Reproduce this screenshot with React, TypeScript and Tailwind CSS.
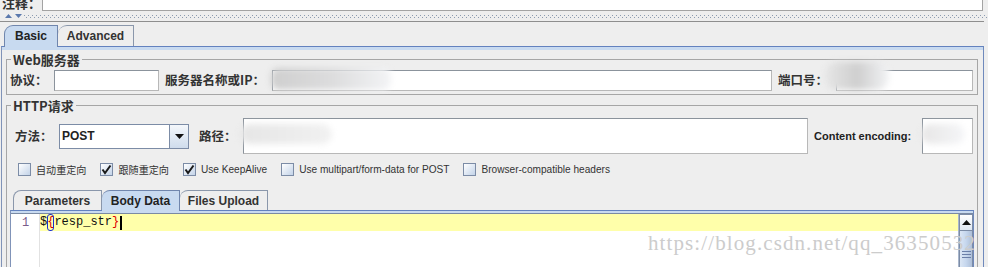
import React from "react";

const F = "font-['Liberation_Sans','Noto_Sans_CJK_SC',sans-serif]";
const CJK = "font-['Noto_Sans_CJK_SC','Liberation_Sans',sans-serif]";

function Check({ checked }: { checked?: boolean }) {
  return (
    <span className="w-[13px] h-[13px] shrink-0 border border-[#7c8ca6] bg-gradient-to-br from-white to-[#c3d3e8] flex items-center justify-center">
      {checked && (
        <svg width="11" height="11" viewBox="0 0 11 11">
          <path d="M1.5 5.5 L4 9 L9.5 1.5" stroke="#1a1a1a" strokeWidth="2" fill="none" />
        </svg>
      )}
    </span>
  );
}

function Blob({ className }: { className: string }) {
  return <div className={`absolute blur-[3px] ${className}`} />;
}

export default function App() {
  return (
    <div className={`w-[988px] h-[267px] overflow-hidden bg-[#eeeeee] relative ${F} text-[#222]`}>
      {/* comment row */}
      <div className="h-[11px] flex">
        <div className="w-[42px] h-[11px] overflow-hidden">
          <div className={`${CJK} font-bold text-[13px] leading-[13px] mt-[-4px] ml-[2px] text-[#333]`}>注释：</div>
        </div>
        <div className="w-[941px] h-[11px] bg-white border-b border-r border-l border-[#a3a3a3]" />
      </div>
      {/* splitter */}
      <div className="h-[10px] relative">
        <svg className="absolute left-[5px] top-[3px]" width="18" height="5" viewBox="0 0 18 5">
          <path d="M0 4 L3.5 0 L7 4 Z" fill="#5b79ad" />
          <path d="M10 0 L17 0 L13.5 4 Z" fill="#5b79ad" />
        </svg>
        <div className="absolute left-[24px] right-0 top-[4px] h-[1px] bg-[repeating-linear-gradient(90deg,#8c9bb0_0_1px,transparent_1px_4px)]" />
        <div className="absolute left-[26px] right-0 top-[6px] h-[1px] bg-[repeating-linear-gradient(90deg,#8c9bb0_0_1px,transparent_1px_4px)]" />
      </div>
      <div className="h-[1px] w-[984px] bg-[#8e8e8e]" />

      {/* main tabbed pane */}
      <div className="ml-[1px] w-[983px] mt-[2px]">
        <div className="flex items-end h-[22px] pl-[3px]">
          <div className="relative z-10 w-[54px] h-[22px] mb-[-1px] bg-[#c8daf0] border-t border-l border-r border-[#7086ad] rounded-tl-[9px] flex items-center justify-center text-[12px] font-bold pb-[1px]">
            Basic
          </div>
          <div className="w-[76px] h-[21px] border-t border-r border-[#8a97ab] rounded-tl-[9px] flex items-center justify-center text-[12px] font-bold text-[#333]">
            Advanced
          </div>
        </div>
        <div className="border-t border-[#6382bf] border-l border-r border-l-[#8093b8] border-r-[#6f89bc]">
          <div className="h-[3px] bg-[#c8daf0]" />
          <div className="pl-[4px] pt-[3px] h-[300px]">
            {/* Web server group */}
            <fieldset className="w-[972px] border border-[#a6a6a6] pl-[3px] pr-[3px] pb-[3px]">
              <legend className={`${CJK} ml-[1px] px-[2px] font-bold text-[13px] leading-[13px] text-[#333]`}>Web服务器</legend>
              <div className={`flex items-center pt-[4px] ${CJK} font-bold text-[12.5px] text-[#333]`}>
                <span className="w-[44px]">协议：</span>
                <div className="w-[105px] h-[21px] bg-white border border-[#8b939c] border-b-[#b8b8b8] border-r-[#b8b8b8]" />
                <span className="ml-[6px] w-[107px]">服务器名称或IP：</span>
                <div className="relative w-[500px] h-[21px] bg-white border border-[#8b939c] border-b-[#b8b8b8] border-r-[#b8b8b8]">
                  <Blob className="left-[-2px] top-[-3px] w-[120px] h-[22px] rounded-[8px] bg-gradient-to-r from-[#cfcfcf] via-[#dcdcdd] to-[#f3f4f6]" />
                </div>
                <span className="ml-[6px] w-[58px]">端口号：</span>
                <div className="relative w-[137px] h-[21px] bg-white border border-[#8b939c] border-b-[#b8b8b8] border-r-[#b8b8b8]">
                  <Blob className="left-[-12px] top-[-9px] w-[64px] h-[28px] rounded-[12px] bg-gradient-to-r from-[#e6e6e6] via-[#cfcfcf] to-[#f2f3f5]" />
                </div>
              </div>
            </fieldset>

            {/* HTTP group */}
            <fieldset className="mt-[4px] w-[972px] border border-[#a6a6a6] pl-[3px] pr-[3px] h-[200px]">
              <legend className={`${CJK} ml-[1px] px-[2px] font-bold text-[13px] leading-[13px] text-[#333]`}>HTTP请求</legend>
              <div className={`flex items-center pt-[6px] pl-[5px] ${CJK} font-bold text-[12.5px] text-[#333]`}>
                <span className="w-[44px]">方法：</span>
                <div className="flex w-[130px] h-[25px]">
                  <div className="flex-1 bg-white border border-[#7c8ca6] flex items-center pl-[2px] font-['Liberation_Sans'] font-bold text-[12px] text-[#222]">
                    POST
                  </div>
                  <div className="w-[19px] border-t border-b border-r border-[#7c8ca6] bg-gradient-to-b from-[#f4f7fb] to-[#cfdcec] flex items-center justify-center">
                    <svg width="9" height="5" viewBox="0 0 9 5"><path d="M0 0 L9 0 L4.5 5 Z" fill="#111" /></svg>
                  </div>
                </div>
                <span className="ml-[10px] w-[44px]">路径：</span>
                <div className="relative w-[565px] h-[36px] bg-white border border-[#8b939c] border-b-[#b8b8b8] border-r-[#b8b8b8]">
                  <Blob className="left-[-4px] top-[5px] w-[92px] h-[20px] rounded-[10px] bg-gradient-to-r from-[#e6e6e6] to-[#f1f1f1]" />
                </div>
                <span className="ml-[6px] w-[108px] font-['Liberation_Sans'] font-bold text-[11px] text-[#222]">Content encoding:</span>
                <div className="relative w-[51px] h-[36px] bg-white border border-[#8b939c] border-b-[#b8b8b8] border-r-[#b8b8b8]">
                  <Blob className="left-[-2px] top-[5px] w-[44px] h-[20px] rounded-[10px] bg-gradient-to-r from-[#e7e6e6] to-[#f5f6f8]" />
                </div>
              </div>

              <div className="flex items-center mt-[8px] pl-[8px] gap-[14px] text-[10.1px] text-[#333]">
                <div className="flex items-center gap-[5px]"><Check /><span className={CJK}>自动重定向</span></div>
                <div className="flex items-center gap-[5px]"><Check checked /><span className={CJK}>跟随重定向</span></div>
                <div className="flex items-center gap-[5px]"><Check checked /><span>Use KeepAlive</span></div>
                <div className="flex items-center gap-[5px]"><Check /><span>Use multipart/form-data for POST</span></div>
                <div className="flex items-center gap-[5px]"><Check /><span>Browser-compatible headers</span></div>
              </div>

              {/* inner tabs */}
              <div className="mt-[12px] w-[964px]">
                <div className="flex items-end h-[21px] pl-[3px]">
                  <div className="w-[89px] h-[20px] border-t border-l border-r border-[#8a97ab] rounded-tl-[8px] flex items-center justify-center font-bold text-[12px] text-[#333]">
                    Parameters
                  </div>
                  <div className="relative z-10 w-[78px] h-[21px] mb-[-1px] bg-[#c8daf0] border-t border-r border-[#7086ad] rounded-tl-[8px] flex items-center justify-center font-bold text-[12px] text-[#222]">
                    Body Data
                  </div>
                  <div className="w-[88px] h-[20px] border-t border-r border-[#8a97ab] rounded-tl-[8px] flex items-center justify-center font-bold text-[12px] text-[#333]">
                    Files Upload
                  </div>
                </div>
                <div className="border-t border-[#6382bf] border-l border-r border-l-[#8093b8] border-r-[#6f89bc]">
                  <div className="h-[2px] bg-[#c8daf0]" />
                  <div className="border-t border-[#7a8aa3] flex h-[60px] bg-white">
                    <div className="w-[29px] border-r border-[#e2e2e2] bg-white text-[12px] font-['Liberation_Mono'] text-[#7a5c8a] pl-[11px] pt-[1px] leading-[17px]">
                      1
                    </div>
                    <div className="flex-1">
                      <div className="h-[17px] bg-[#ffffaa] flex items-center font-['Liberation_Mono'] text-[12px] leading-[17px] text-[#111]">
                        <span>$</span>
                        <span className="text-[#e00000] outline outline-1 outline-[#1a2fd0] rounded-[3px] -outline-offset-1">{"{"}</span>
                        <span>resp_str</span>
                        <span className="text-[#e00000]">{"}"}</span>
                        <span className="w-[2px] h-[14px] bg-black ml-[1px]" />
                      </div>
                    </div>
                    <div className="w-[15px] border-l border-[#a8b6cc] flex flex-col">
                      <div className="h-[17px] border border-[#7c8ca6] bg-gradient-to-b from-white to-[#dfe7f2] flex items-center justify-center">
                        <svg width="9" height="5" viewBox="0 0 9 5"><path d="M0 5 L9 5 L4.5 0 Z" fill="#111" /></svg>
                      </div>
                      <div className="flex-1 border border-t-0 border-[#7c8ca6] bg-gradient-to-r from-[#dbe6f4] via-[#c6d7ee] to-[#aebfd8] flex flex-col items-center pt-[20px] gap-[2px]">
                        <div className="w-[9px] h-[1px] bg-[#6a7fa8]" />
                        <div className="w-[9px] h-[1px] bg-[#6a7fa8]" />
                        <div className="w-[9px] h-[1px] bg-[#6a7fa8]" />
                      </div>
                    </div>
                  </div>
                </div>
              </div>
            </fieldset>
          </div>
        </div>
      </div>

      {/* watermark */}
      <div className="absolute left-[648px] top-[231px] font-['Liberation_Serif'] text-[21px] leading-[24px] tracking-[1.1px] text-[#cccccc] whitespace-nowrap pointer-events-none">
        https://blog.csdn.net/qq_36350532
      </div>
    </div>
  );
}
